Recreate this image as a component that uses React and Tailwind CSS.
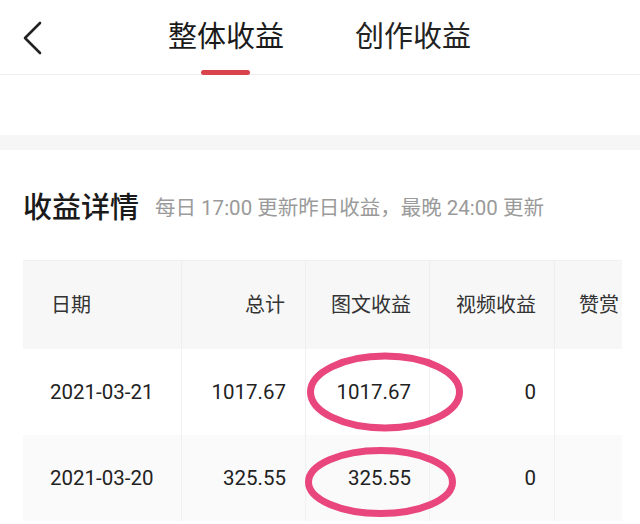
const font = { fontFamily: "Roboto, 'Noto Sans CJK SC', sans-serif" };

const rows = [
  { date: "2021-03-21", total: "1017.67", article: "1017.67", video: "0", bg: "bg-white" },
  { date: "2021-03-20", total: "325.55", article: "325.55", video: "0", bg: "bg-[#fafafa]" },
];

const BackIcon = () => (
  <svg width="22" height="34" viewBox="0 0 22 34" fill="none">
    <path d="M19 2 L4 17 L19 32" stroke="#222" strokeWidth="2.6" strokeLinecap="round" strokeLinejoin="round" />
  </svg>
);

const App = () => {
  return (
    <div className="w-[640px] h-[524px] overflow-hidden bg-white text-[#222]" style={font}>
      {/* top tabs */}
      <div className="relative flex items-center h-[75px] border-b border-[#eeeeee]">
        <div className="pl-[21px] pt-[2px]">
          <BackIcon />
        </div>
        <div className="relative ml-[125px] h-full flex items-center">
          <span className="text-[29px] leading-none text-[#1a1a1a]">整体收益</span>
          <div className="absolute left-[33px] bottom-[-1px] w-[49px] h-[5px] rounded-full bg-[#d9434b]" />
        </div>
        <div className="ml-[71px] text-[29px] leading-none text-[#222]">创作收益</div>
      </div>

      <div className="h-[60px]" />
      <div className="h-[15px] bg-[#f6f6f6]" />

      {/* title */}
      <div className="flex items-center h-[40px] mt-[38px] pl-[23px]">
        <span className="text-[29px] leading-none font-medium text-[#1a1a1a]">收益详情</span>
        <span className="ml-[16px] text-[20.5px] leading-none text-[#9a9a9a]">
          每日 17:00 更新昨日收益，最晚 24:00 更新
        </span>
      </div>

      {/* table */}
      <div className="relative ml-[23px] mr-[18px] mt-[32px] border-t border-[#f0f0f0]">
        <div className="grid grid-cols-[159px_124px_124px_125px_1fr] h-[88px] bg-[#f7f7f7] text-[20px] text-[#333]">
          <div className="flex items-center pl-[28px] border-r border-[#efefef]">日期</div>
          <div className="flex items-center justify-end pr-[20px] border-r border-[#efefef]">总计</div>
          <div className="flex items-center justify-end pr-[18px] border-r border-[#efefef]">图文收益</div>
          <div className="flex items-center justify-end pr-[18px] border-r border-[#efefef]">视频收益</div>
          <div className="flex items-center pl-[24px] whitespace-nowrap">赞赏</div>
        </div>
        {rows.map((r) => (
          <div
            key={r.date}
            className={`grid grid-cols-[159px_124px_124px_125px_1fr] h-[86px] text-[20.5px] text-[#222] ${r.bg}`}
          >
            <div className="flex items-center pl-[27px] border-r border-[#f0f0f0]">{r.date}</div>
            <div className="flex items-center justify-end pr-[19px] border-r border-[#f0f0f0]">{r.total}</div>
            <div className="flex items-center justify-end pr-[18px] border-r border-[#f0f0f0]">{r.article}</div>
            <div className="flex items-center justify-end pr-[18px] border-r border-[#f0f0f0]">{r.video}</div>
            <div />
          </div>
        ))}

        {/* hand-drawn highlight marks */}
        <svg className="absolute left-0 top-0 pointer-events-none" width="594" height="264" viewBox="0 0 594 264">
          <ellipse cx="362" cy="131" rx="74.5" ry="36" fill="none" stroke="#e8467c" strokeWidth="7" />
          <ellipse cx="357.5" cy="221" rx="72" ry="31.5" fill="none" stroke="#e8467c" strokeWidth="7" />
        </svg>
      </div>
    </div>
  );
};

export default App;
